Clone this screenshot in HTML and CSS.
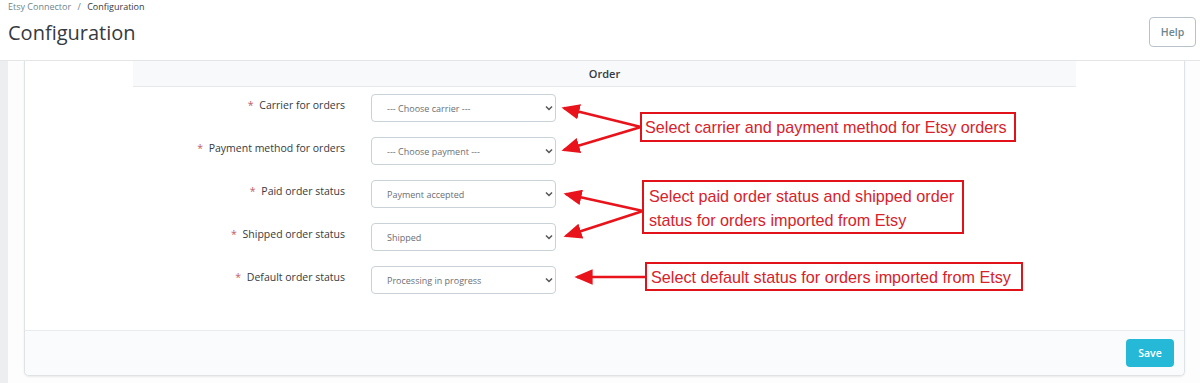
FILE: index.html
```html
<!DOCTYPE html>
<html lang="en">
<head>
    <meta charset="UTF-8">
    <meta name="viewport" content="width=device-width, initial-scale=1.0">
    <title>Configuration</title>
    <link rel="stylesheet" href="styles.css">
</head>
<body>
    <div class="pageHeader">
        <div class="headerText">
            <div class="breadcrumb">
                <span class="crumbLink">Etsy Connector</span>
                <span class="crumbSep">/</span>
                <span class="crumbCurrent">Configuration</span>
            </div>
            <h1 class="pageTitle">Configuration</h1>
        </div>
        <button type="button" class="helpBtn">Help</button>
    </div>

    <div class="main">
        <div class="sidebar"></div>
        <div class="content">
            <div class="card">
                <div class="cardBody">
                    <div class="formSection">
                        <div class="sectionTitle">Order</div>

                        <div class="formRow">
                            <label class="formLabel"><span class="req">*</span> Carrier for orders</label>
                            <div class="selectWrap">
                                <select class="formSelect"><option>--- Choose carrier ---</option></select>
                                <span class="chevron"><svg width="8" height="6" viewBox="0 0 8 6"><path d="M1 1.5 L4 4.5 L7 1.5" fill="none" stroke="#555" stroke-width="1.5"/></svg></span>
                            </div>
                        </div>

                        <div class="formRow">
                            <label class="formLabel"><span class="req">*</span> Payment method for orders</label>
                            <div class="selectWrap">
                                <select class="formSelect"><option>--- Choose payment ---</option></select>
                                <span class="chevron"><svg width="8" height="6" viewBox="0 0 8 6"><path d="M1 1.5 L4 4.5 L7 1.5" fill="none" stroke="#555" stroke-width="1.5"/></svg></span>
                            </div>
                        </div>

                        <div class="formRow">
                            <label class="formLabel"><span class="req">*</span> Paid order status</label>
                            <div class="selectWrap">
                                <select class="formSelect"><option>Payment accepted</option></select>
                                <span class="chevron"><svg width="8" height="6" viewBox="0 0 8 6"><path d="M1 1.5 L4 4.5 L7 1.5" fill="none" stroke="#555" stroke-width="1.5"/></svg></span>
                            </div>
                        </div>

                        <div class="formRow">
                            <label class="formLabel"><span class="req">*</span> Shipped order status</label>
                            <div class="selectWrap">
                                <select class="formSelect"><option>Shipped</option></select>
                                <span class="chevron"><svg width="8" height="6" viewBox="0 0 8 6"><path d="M1 1.5 L4 4.5 L7 1.5" fill="none" stroke="#555" stroke-width="1.5"/></svg></span>
                            </div>
                        </div>

                        <div class="formRow">
                            <label class="formLabel"><span class="req">*</span> Default order status</label>
                            <div class="selectWrap">
                                <select class="formSelect"><option>Processing in progress</option></select>
                                <span class="chevron"><svg width="8" height="6" viewBox="0 0 8 6"><path d="M1 1.5 L4 4.5 L7 1.5" fill="none" stroke="#555" stroke-width="1.5"/></svg></span>
                            </div>
                        </div>
                    </div>
                </div>
                <div class="cardFooter">
                    <button type="button" class="saveBtn">Save</button>
                </div>
            </div>
        </div>
    </div>

    <!-- anotaciones encima del formulario -->
    <svg class="arrows" width="1200" height="383" viewBox="0 0 1200 383">
        <defs>
            <marker id="head" markerWidth="7" markerHeight="6" refX="6" refY="3" orient="auto" markerUnits="strokeWidth">
                <path d="M0 0 L7 3 L0 6 Z" fill="#e8131b"/>
            </marker>
        </defs>
        <g stroke="#e8131b" stroke-width="2.6" fill="none" marker-end="url(#head)">
            <line x1="641" y1="127" x2="564" y2="108"/>
            <line x1="641" y1="127" x2="564" y2="150"/>
            <line x1="643" y1="211" x2="566" y2="194"/>
            <line x1="643" y1="211" x2="566" y2="236"/>
            <line x1="646" y1="277" x2="577" y2="277"/>
        </g>
    </svg>
    <div class="note note1">Select carrier and payment method for Etsy orders</div>
    <div class="note note2">Select paid order status and shipped order status for orders imported from Etsy</div>
    <div class="note note3">Select default status for orders imported from Etsy</div>
</body>
</html>
```

FILE: styles.css
```css
body {
    margin: 0;
    font-family: "Open Sans", "Noto Sans", sans-serif;
    color: #363a41;
    background-color: #ffffff;
    position: relative;
    height: 383px;
    overflow: hidden;
}
.pageHeader {
    height: 60px;
    border-bottom: 1px solid #e4e6e8;
    display: flex;
    justify-content: space-between;
    align-items: flex-start;
    padding: 0 4px 0 8px;
}
.breadcrumb {
    font-size: 9px;
    margin-top: 1px;
    line-height: 12px;
}
.crumbLink {
    color: #6c868e;
}
.crumbSep {
    color: #6c868e;
    margin: 0 4px;
}
.crumbCurrent {
    color: #363a41;
}
.pageTitle {
    font-size: 20px;
    font-weight: 400;
    margin: 6px 0 0;
    line-height: 28px;
    color: #363a41;
}
.helpBtn {
    margin-top: 17px;
    width: 47px;
    height: 30px;
    border: 1px solid #b7c3c7;
    border-radius: 4px;
    background-color: #ffffff;
    color: #6c868e;
    font-family: inherit;
    font-size: 10.5px;
    font-weight: 600;
    padding: 0;
}
.main {
    display: flex;
    height: 322px;
}
.sidebar {
    width: 8px;
    background-color: #eceeef;
}
.content {
    flex: 1;
    padding: 0 15px 0 16px;
    background-color: #fdfdfd;
}
.card {
    background-color: #ffffff;
    border: 1px solid #dfe3e5;
    border-top: none;
    border-radius: 0 0 5px 5px;
    box-shadow: 0 1px 2px rgba(0, 0, 0, 0.08);
}
.cardBody {
    padding: 0 108px 36px 108px;
    height: 233px;
}
.sectionTitle {
    height: 25px;
    line-height: 25px;
    background-color: #f8f9fa;
    border-bottom: 1px solid #e6e8ea;
    text-align: center;
    font-size: 11px;
    font-weight: 600;
    margin-bottom: 7px;
}
.formRow {
    display: flex;
    align-items: flex-start;
    margin-bottom: 15px;
}
.formLabel {
    width: 212px;
    text-align: right;
    font-size: 10.5px;
    line-height: 14px;
    padding-top: 4px;
    margin-right: 26px;
    color: #363a41;
}
.req {
    color: #c05c67;
    margin-right: 3px;
}
.selectWrap {
    position: relative;
    width: 185px;
    height: 28px;
}
.formSelect {
    appearance: none;
    -webkit-appearance: none;
    width: 100%;
    height: 28px;
    border: 1px solid #c9d2d6;
    border-radius: 4px;
    background-color: #ffffff;
    font-family: inherit;
    font-size: 9px;
    color: #6c6f74;
    padding: 1px 0 0 15px;
    margin: 0;
}
.chevron {
    position: absolute;
    right: 3px;
    top: 11px;
    line-height: 0;
}
.cardFooter {
    border-top: 1px solid #e9ecee;
    background-color: #fafbfc;
    height: 44px;
    display: flex;
    justify-content: flex-end;
    align-items: center;
    padding-right: 10px;
    border-radius: 0 0 5px 5px;
}
.saveBtn {
    width: 48px;
    height: 28px;
    background-color: #25b9d7;
    border: none;
    border-radius: 4px;
    color: #ffffff;
    font-family: inherit;
    font-size: 10.5px;
    font-weight: 600;
    padding: 0;
}
.arrows {
    position: absolute;
    left: 0;
    top: 0;
    pointer-events: none;
}
.note {
    position: absolute;
    border: 2px solid #e2121b;
    background-color: #ffffff;
    color: #d8222b;
    font-family: "Liberation Sans", Arial, sans-serif;
    font-size: 16.2px;
    line-height: 24px;
    padding: 1px 3px;
    box-sizing: border-box;
}
.note1 {
    left: 640px;
    top: 112px;
    width: 376px;
    height: 30px;
}
.note2 {
    left: 642px;
    top: 180px;
    width: 322px;
    height: 54px;
    padding-top: 2px;
    padding-left: 5px;
}
.note3 {
    left: 645px;
    top: 262px;
    width: 378px;
    height: 29px;
    padding-left: 4px;
}
```
